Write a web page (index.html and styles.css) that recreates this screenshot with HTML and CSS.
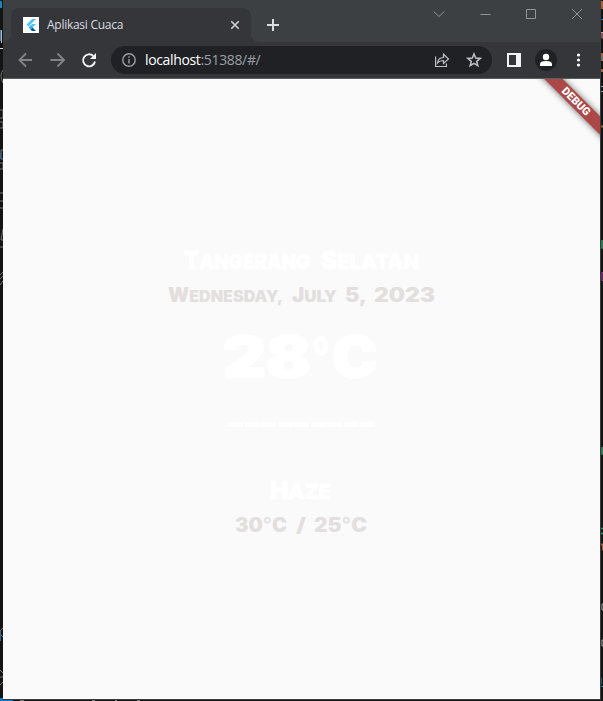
FILE: index.html
```html
<!DOCTYPE html>
<html lang="id">
<head>
<meta charset="utf-8">
<title>Aplikasi Cuaca</title>
<link rel="stylesheet" href="styles.css">
</head>
<body>
<svg class="desktop" viewBox="0 0 603 701" fill="none">
  <path d="M0 1h2v7H0z" fill="#1687bd"/><path d="M0 30h1v11H0z" fill="#2485c7"/><path d="M1.5 30v13" stroke="#d7aaa0"/><path d="M0 48.500h3" stroke="#ddd"/>
  <path d="M3 70q-4 5 0 13M0 110h3v8H0m0 4h3v6H0M3 150H1v9h2m-3 4h3v6H0M0 193h3m-3 8h3m-3 7h3M3 229l-2 11h2m-3 7h3M0 275l3-3m-3 7l3-3m-3 9l3-4M3 628q-6 4 0 9t0 10M0 670l3 3m-3 4h3m-3 8l3-3" stroke="#777"/>
  <path d="M0 153h1v6H0zM0 632h1v9H0z" fill="#28679b"/>
  <path d="M0 698h13v3H0z" fill="#0878c8"/><path d="M20 700.500h4m68 0h3m20 0h2m20 0h3" stroke="#777"/>
  <path d="M602 1v8M602 53v8M602 69v3M601 126.500h2M601 544.500h2v6" stroke="#a4613c" stroke-width="2"/>
  <path d="M601 19.500h2M602 57v3M601 678v6M601 686.500h2" stroke="#1883c4"/>
  <path d="M601 32.500h2m-1 0v6" stroke="#d99"/>
  <path d="M601 86.500h2m-2 5h2" stroke="#78aeb5"/>
  <path d="M602 240v8h2M602 447v7h2M601 528.500h2m-2 5h2" stroke="#329466" stroke-width="1.500"/>
  <path d="M603 272.500h-1v8h1" stroke="#a647a0"/>
  <path d="M603 604h-1v6h1m0 30h-1v6h1" stroke="#aaa"/>
</svg>
<main class="window">
  <header class="tabstrip">
    <div class="tab">
      <svg class="favicon" viewBox="0 0 16 16"><path fill="#fff" d="M0 0h16v16H0z"/><path fill="#54c5f8" d="M9 2h4L5.500 9.500l-2-2zM9 7h4l-4 4-2-2z"/><path fill="#29b6f6" d="M5.500 10.500l2-2 2 2-2 2z"/><path fill="#01579b" d="M7.500 12.500l2-2L13 14H9z"/></svg>
      <span class="tab-title">Aplikasi Cuaca</span>
      <svg class="tab-close" viewBox="0 0 10 10"><path d="M1.300 1.300l7.400 7.400m0-7.400L1.300 8.700"/></svg>
    </div>
    <svg class="new-tab" viewBox="0 0 12 12"><path d="M6 0v12M0 6h12"/></svg>
    <svg class="controls" viewBox="0 0 150 12"><path d="M.7 3.500l5.300 5 5.300-5M47.500 6.500h10M93.500 1.500h9v9h-9zM139 1l10 10m0-10l-10 10"/></svg>
  </header>
  <nav class="toolbar">
    <svg class="nav-icons" viewBox="0 0 80 16" fill="none" stroke-width="1.900"><path stroke="#818487" d="M15 8H2.500M9 1.500L2.500 8 9 14.500M33.500 8H47M40.500 1.500L47 8l-6.500 6.500"/><path stroke="#f1f3f4" d="M76.300 4A6 6 0 1 0 78 9.500"/><path fill="#f1f3f4" d="M79 1v6h-6z"/></svg>
    <div class="address">
      <svg class="info" viewBox="0 0 14 14" fill="none" stroke="#9aa0a6" stroke-width="1.400"><circle cx="7" cy="7" r="6.200"/><path d="M7 6v4.500M7 3.300v1.500"/></svg>
      <span class="url"><b>localhost</b>:51388/#/</span>
      <svg class="address-icons" viewBox="0 0 48 16" fill="none" stroke="#bdc1c6" stroke-width="1.200"><path d="M1.600 4.500v10h10.800v-3M3.500 11Q4 5.700 9.500 5.500V2.200L14.500 7l-5 4.500V8.500Q5.500 8.500 3.500 11z"/><path stroke-width="1.500" d="M40 2l1.700 4.100 4.500.3-3.500 2.900 1.100 4.400L40 11.300l-3.800 2.400 1.100-4.400-3.500-2.900 4.500-.3z"/></svg>
    </div>
    <svg class="menu-icons" viewBox="0 0 80 22"><path fill="#f1f3f4" fill-rule="evenodd" d="M3 4h14v14H3zm2 2v10h7V6z"/><circle cx="42" cy="11" r="11" fill="#202124"/><g fill="#fff"><circle cx="42" cy="8" r="3.200"/><path d="M36 17v-2q0-3 6-3t6 3v2z"/><circle cx="74.500" cy="6" r="1.600"/><circle cx="74.500" cy="11" r="1.600"/><circle cx="74.500" cy="16" r="1.600"/></g></svg>
  </nav>
  <section class="page">
    <div class="banner">DEBUG</div>
    <svg class="line city" viewBox="0 0 597 24"><text x="181" y="21" textLength="126" lengthAdjust="spacingAndGlyphs">T<tspan class="small">angerang</tspan></text><text x="318" y="21" textLength="98" lengthAdjust="spacingAndGlyphs">S<tspan class="small">elatan</tspan></text></svg>
    <svg class="line date" viewBox="0 0 597 24"><text x="165" y="17" textLength="115" lengthAdjust="spacingAndGlyphs">W<tspan class="small">ednesday,</tspan></text><text x="289" y="17" textLength="45" lengthAdjust="spacingAndGlyphs">J<tspan class="small">uly</tspan></text><text x="342" y="17" textLength="22" lengthAdjust="spacingAndGlyphs">5,</text><text x="371" y="17" textLength="61" lengthAdjust="spacingAndGlyphs">2023</text></svg>
    <svg class="line temperature" viewBox="0 0 597 60"><text x="220" y="47" textLength="88" lengthAdjust="spacingAndGlyphs">28</text><text class="degree" x="309" y="47" textLength="18" lengthAdjust="spacingAndGlyphs">°</text><text x="329" y="47" textLength="45" lengthAdjust="spacingAndGlyphs">C</text></svg>
    <div class="divider"><i></i><i></i><i></i><i></i><i></i><i></i><i></i><i></i><i></i></div>
    <svg class="line weather" viewBox="0 0 597 24"><text x="267" y="21" textLength="61" lengthAdjust="spacingAndGlyphs">H<tspan class="small">aze</tspan></text></svg>
    <svg class="line range" viewBox="0 0 597 24"><text x="232" y="17" textLength="52" lengthAdjust="spacingAndGlyphs">30<tspan class="degree">°</tspan>C</text><text x="293" y="17" textLength="10" lengthAdjust="spacingAndGlyphs">/</text><text x="311" y="17" textLength="53" lengthAdjust="spacingAndGlyphs">25<tspan class="degree">°</tspan>C</text></svg>
  </section>
</main>
</body>
</html>
```
FILE: styles.css
```css
* { box-sizing: border-box; }
body {
  margin: 0;
  width: 603px;
  height: 701px;
  overflow: hidden;
  position: relative;
  background: #141414;
  font-family: "Open Sans", "Noto Sans", sans-serif;
}
svg { display: block; flex: none; }
.desktop { position: absolute; inset: 0; width: 603px; height: 701px; }
.window {
  position: relative;
  width: 598px;
  height: 700px;
  margin-left: 3px;
  border-right: 1px solid #3b3b3c;
  border-bottom: 1px solid #3b3b3c;
  background: #fafafa;
}
.tabstrip {
  display: flex;
  height: 42px;
  padding: 8px 0 0 8px;
  background: #3c4043;
}
.tab {
  position: relative;
  display: flex;
  align-items: center;
  width: 240px;
  padding: 0 11px 0 12px;
  border-radius: 8px 8px 0 0;
  background: #35363a;
}
.tab::before, .tab::after {
  content: "";
  position: absolute;
  bottom: 0;
  width: 8px;
  height: 8px;
}
.tab::before { left: -8px; background: radial-gradient(circle at 0 0, transparent 7.5px, #35363a 8px); }
.tab::after { right: -8px; background: radial-gradient(circle at 100% 0, transparent 7.5px, #35363a 8px); }
.favicon { width: 16px; height: 16px; }
.tab-title {
  flex: 1;
  margin-left: 8px;
  font-size: 12px;
  line-height: 16px;
  letter-spacing: -.27px;
  color: #dadce0;
}
.tab-close { width: 10px; height: 10px; stroke: #d0d1d3; stroke-width: 1.6; }
.new-tab { width: 12px; height: 12px; margin: 11px 0 0 16px; stroke: #dadce0; stroke-width: 2; }
.controls {
  align-self: flex-start;
  width: 150px;
  height: 12px;
  margin-left: 154px;
  fill: none;
  stroke: #919395;
}
.toolbar {
  display: flex;
  align-items: center;
  height: 37px;
  padding: 0 0 1px 14px;
  border-bottom: 1px solid #5b5d61;
  background: #35363a;
}
.nav-icons { width: 80px; height: 16px; }
.address {
  display: flex;
  align-items: center;
  width: 381px;
  height: 28px;
  margin-left: 14px;
  padding: 0 10px 0 11px;
  border-radius: 14px;
  background: #202124;
}
.info { width: 14px; height: 14px; }
.url { flex: 1; margin-left: 9px; font-size: 14px; line-height: 20px; letter-spacing: -.35px; color: #9aa0a6; }
.url b { color: #fff; font-weight: 400; }
.address-icons { width: 48px; height: 16px; }
.menu-icons { width: 80px; height: 22px; margin-left: 12px; }
.page {
  position: relative;
  height: 620px;
  overflow: hidden;
  padding-top: 169px;
}
.line {
  width: 597px;
  height: 24px;
  overflow: visible;
  font-family: Inter, sans-serif;
  font-weight: 900;
  text-transform: uppercase;
}
.city, .weather { fill: #fff; stroke: #fff; stroke-width: .8px; font-size: 24px; }
.city .small, .weather .small { font-size: 20px; }
.date, .range { fill: #e3dfde; font-size: 19.5px; }
.date .small { font-size: 16px; }
.date { margin-top: 13px; }
.temperature { height: 60px; margin-top: 21px; fill: #fff; stroke: #fff; stroke-width: 2px; font-size: 56px; }
.degree { font-weight: 500; }
.temperature .degree { font-weight: 700; stroke-width: 1px; }
.divider { display: flex; justify-content: space-between; width: 147px; margin: 32px 0 0 225px; }
.divider i { width: 15px; height: 5px; background: #fff; }
.weather { margin-top: 51px; }
.range { margin-top: 13px; }
.banner {
  position: absolute;
  top: 16px;
  right: -41px;
  width: 130px;
  height: 13px;
  transform: rotate(45deg);
  background: #ad4849;
  box-shadow: 0 0 6px #0009;
  color: #fff;
  font: 900 11px/13px Roboto, sans-serif;
  text-align: center;
}
```
